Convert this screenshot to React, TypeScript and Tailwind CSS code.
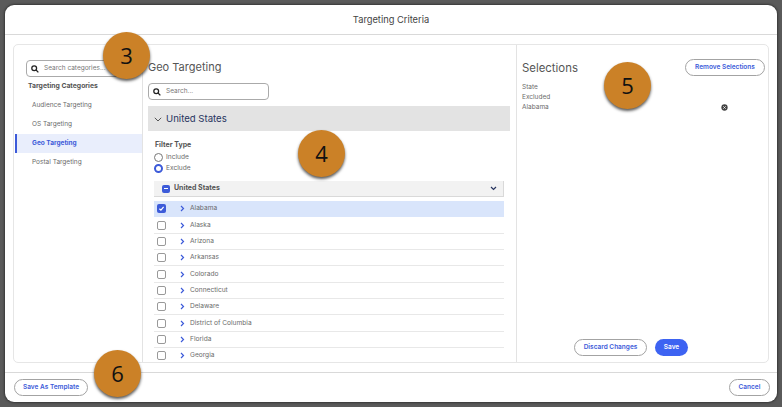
import React from "react";

const states = ["Alabama","Alaska","Arizona","Arkansas","Colorado","Connecticut","Delaware","District of Columbia","Florida","Georgia"];

function Badge({ n, x, y }: { n: string; x: number; y: number }) {
  return (
    <div
      className="absolute w-[47px] h-[47px] rounded-full bg-[#cb8127] flex items-center justify-center text-[22px] text-[#111] shadow-[0_2px_3px_rgba(0,0,0,0.65)] z-10"
      style={{ left: x, top: y, fontFamily: "'Open Sans', sans-serif" }}
    >
      {n}
    </div>
  );
}

function SearchIcon() {
  return (
    <svg width="8" height="8" viewBox="0 0 10 10" fill="none" stroke="#222" strokeWidth="1.6" className="shrink-0">
      <circle cx="4" cy="4" r="3" />
      <path d="M6.3 6.3 9.2 9.2" />
    </svg>
  );
}

function Pill({ children, className = "" }: { children: React.ReactNode; className?: string }) {
  return (
    <button className={`h-[17px] rounded-full border border-[#a3a3a3] bg-white text-[#3d5bd9] text-[6.5px] font-semibold flex items-center justify-center ${className}`}>
      {children}
    </button>
  );
}

function Chevron() {
  return (
    <svg width="5" height="7" viewBox="0 0 5 7" fill="none" stroke="#3d5bd9" strokeWidth="1.2">
      <path d="M1 1l2.5 2.5L1 6" />
    </svg>
  );
}

export default function App() {
  return (
    <div className="relative w-[782px] h-[407px] bg-[#5a5a5a] pt-[5px] pl-[5px] overflow-hidden text-[#6b6b6b]" style={{ fontFamily: "Inter, 'Liberation Sans', sans-serif" }}>
      <Badge n="3" x={103} y={32} />
      <Badge n="4" x={298} y={130} />
      <Badge n="5" x={604} y={62} />
      <Badge n="6" x={94} y={350} />

      <div className="w-[772px] h-[397px] bg-white rounded-[9px] flex flex-col shadow-[0_0_3px_rgba(0,0,0,0.8)]">
        <div className="h-[30px] shrink-0 border-b border-[#d9d9d9] flex items-center justify-center pt-[1px] text-[9.3px] text-[#444]">
          Targeting Criteria
        </div>

        <div className="h-[337px] shrink-0 pt-[9px] px-[8px] pb-[9px]">
          <div className="h-[319px] border border-[#e6e6e6] rounded-[5px] flex overflow-hidden">
            {/* Sidebar */}
            <div className="w-[129px] shrink-0 border-r border-[#e3e3e3] pt-[15px] flex flex-col">
              <div className="ml-[12px] w-[100px] h-[17px] shrink-0 border border-[#aaaaaa] rounded-[4px] flex items-center pl-[4px] gap-[5px] text-[6.5px] text-[#777] whitespace-nowrap overflow-hidden">
                <SearchIcon />
                <span>Search categories...</span>
              </div>
              <div className="ml-[14px] mt-[2px] h-[14px] flex items-center text-[6.8px] font-bold text-[#555]">Targeting Categories</div>
              <div className="mt-[3px] flex flex-col text-[6.5px]">
                <div className="h-[19px] pl-[18px] flex items-center">Audience Targeting</div>
                <div className="h-[19px] pl-[18px] flex items-center">OS Targeting</div>
                <div className="h-[19px] ml-[1px] pl-[15px] flex items-center bg-[#e9eefc] border-l-2 border-[#3d5bd9] text-[#3d5bd9] font-bold">Geo Targeting</div>
                <div className="h-[19px] pl-[18px] flex items-center">Postal Targeting</div>
              </div>
            </div>

            {/* Middle */}
            <div className="w-[374px] shrink-0 border-r border-[#e3e3e3] pl-[5px] pr-[6px] flex flex-col overflow-hidden">
              <div className="mt-[13px] h-[19px] shrink-0 text-[11px] leading-[18px] text-[#555]">Geo Targeting</div>
              <div className="mt-[6px] w-[121px] h-[17px] shrink-0 border border-[#aaaaaa] rounded-[4px] flex items-center pl-[4px] gap-[5px] text-[6.5px] text-[#777]">
                <SearchIcon />
                <span className="mt-[1px]">Search...</span>
              </div>
              <div className="mt-[6px] h-[25px] shrink-0 bg-[#e3e3e3] flex items-center pl-[6px] gap-[4px] text-[9.6px] text-[#27345f]">
                <svg className="mt-[1px]" width="8" height="5" viewBox="0 0 8 5" fill="none" stroke="#555" strokeWidth="1"><path d="M.8.8 4 4l3.2-3.2" /></svg>
                <span className="mt-[2px]">United States</span>
              </div>
              <div className="ml-[7px] mt-[9px] text-[7px] font-bold text-[#555] h-[10px] shrink-0 flex items-center">Filter Type</div>
              <div className="ml-[6px] mt-[2px] flex items-center shrink-0 gap-[3px] text-[6.6px] leading-[11px] h-[11px]">
                <span className="w-[9px] h-[9px] rounded-full border border-[#777] bg-white" />
                <span>Include</span>
              </div>
              <div className="ml-[6px] flex items-center shrink-0 gap-[3px] text-[6.6px] leading-[11px] h-[11px]">
                <span className="w-[9px] h-[9px] rounded-full border-[2.5px] border-[#3d5bd9] bg-white" />
                <span>Exclude</span>
              </div>
              <div className="ml-[6px] w-[350px] mt-[7px] h-[16px] shrink-0 bg-[#f2f2f2] border-b border-r border-[#d9d9d9] flex items-center pl-[8px] gap-[4px] text-[7px] font-bold text-[#555]">
                <span className="w-[8px] h-[8px] rounded-[2px] bg-[#3d5bd9] flex items-center justify-center">
                  <span className="w-[4px] h-px bg-white" />
                </span>
                <span className="flex-1">United States</span>
                <svg className="mr-[6px]" width="7" height="5" viewBox="0 0 7 5" fill="none" stroke="#27345f" strokeWidth="1.2"><path d="M1 1l2.5 2.5L6 1" /></svg>
              </div>
              <div className="ml-[6px] w-[350px] mt-[4px] flex flex-col">
                {states.map((s, i) => (
                  <div key={s} className={`h-[16.35px] shrink-0 flex items-center text-[6.6px] leading-[15px] border-b ${i === 0 ? "bg-[#d9e5fb] border-[#d9e5fb]" : "border-[#e8e8e8]"}`}>
                    {i === 0 ? (
                      <span className="ml-[3px] w-[9px] h-[9px] rounded-[2px] bg-[#3d5bd9] flex items-center justify-center">
                        <svg width="7" height="7" viewBox="0 0 6 6" fill="none" stroke="#fff" strokeWidth="1"><path d="M1.2 3.2 2.5 4.4 4.8 1.6" /></svg>
                      </span>
                    ) : (
                      <span className="ml-[3px] w-[9px] h-[9px] rounded-[2px] border border-[#999] bg-white" />
                    )}
                    <span className="ml-[14px] flex"><Chevron /></span>
                    <span className="ml-[5px]">{s}</span>
                  </div>
                ))}
              </div>
            </div>

            {/* Right */}
            <div className="flex-1 min-w-0 flex flex-col pl-[5px] pr-[3px]">
              <div className="mt-[14px] h-[17px] flex items-center justify-between">
                <span className="mt-[2px] text-[11.4px] text-[#555]">Selections</span>
                <Pill className="w-[80px]">Remove Selections</Pill>
              </div>
              <div className="mt-[6px] text-[6.5px] leading-[10px]">
                <div>State</div>
                <div>Excluded</div>
                <div className="flex items-center justify-between pr-[37px]">
                  <span>Alabama</span>
                  <svg className="mt-[1px]" width="7" height="7" viewBox="0 0 8 8"><circle cx="4" cy="4" r="3.6" fill="#444" /><path d="M2.6 2.6l2.8 2.8M5.4 2.6 2.6 5.4" stroke="#fff" strokeWidth=".9" /></svg>
                </div>
              </div>
              <div className="mt-auto mb-[6px] flex justify-end gap-[8px] pr-[77px]">
                <Pill className="w-[73px]">Discard Changes</Pill>
                <button className="w-[33px] h-[17px] rounded-full bg-[#3d63f2] text-white text-[6.5px] font-semibold">Save</button>
              </div>
            </div>
          </div>
        </div>

        <div className="flex-1 border-t border-[#d9d9d9] flex items-center justify-between pl-[9px] pr-[7px]">
          <Pill className="w-[74px]">Save As Template</Pill>
          <Pill className="w-[41px]">Cancel</Pill>
        </div>
      </div>
    </div>
  );
}
